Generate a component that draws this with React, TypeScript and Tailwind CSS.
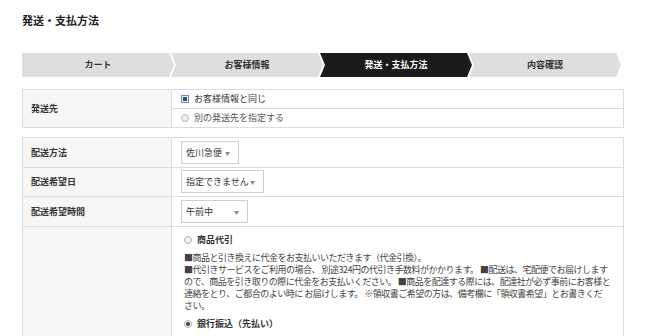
import React from 'react';

const font = { fontFamily: '"Noto Sans CJK JP", "Noto Sans", sans-serif' };

function Radio({ checked = false }: { checked?: boolean }) {
  return (
    <span className="inline-flex w-[8px] h-[8px] rounded-full border border-[#b5b5b5] bg-[#f0f0f0] items-center justify-center mr-[5px] shrink-0">
      {checked && <span className="w-[4px] h-[4px] rounded-full bg-[#444]" />}
    </span>
  );
}

function Checkbox() {
  return (
    <span className="inline-flex w-[8px] h-[8px] border border-[#6f8fbf] bg-[#e6edf7] items-center justify-center mr-[5px] shrink-0">
      <span className="w-[4px] h-[4px] bg-[#2c4f86]" />
    </span>
  );
}

function Select({ label, width }: { label: string; width: string }) {
  return (
    <div className={`${width} h-[23px] border border-[#cfcfcf] bg-white flex items-center justify-between pl-[4px] pr-[8px] text-[9px] text-[#333]`}>
      <span>{label}</span>
      <span className="text-[5px] text-[#888]">▼</span>
    </div>
  );
}

export default function App() {
  const steps = [
    { label: 'カート', active: false },
    { label: 'お客様情報', active: false },
    { label: '発送・支払方法', active: true },
    { label: '内容確認', active: false },
  ];

  const rows = [
    { label: '配送方法', value: '佐川急便', w: 'w-[58px]' },
    { label: '配送希望日', value: '指定できません', w: 'w-[83px]' },
    { label: '配送希望時間', value: '午前中', w: 'w-[67px]' },
  ];

  return (
    <div style={font} className="w-[650px] h-[336px] overflow-hidden bg-white pl-[22px] pr-[26px] text-[#333]">
      <h1 className="pt-[13px] text-[11px] leading-[14px] font-bold text-[#222]">発送・支払方法</h1>

      {/* Steps */}
      <div className="mt-[26px] flex h-[24px]">
        {steps.map((s, i) => (
          <div
            key={i}
            className={`w-[152px] shrink-0 h-full flex items-center justify-center text-[9px] font-bold ${i > 0 ? '-ml-[3px]' : ''} ${
              s.active ? 'bg-[#1b1b1b] text-white' : 'bg-[#dedede] text-[#333]'
            } ${
              i === 0
                ? '[clip-path:polygon(0_0,calc(100%_-_5px)_0,100%_50%,calc(100%_-_5px)_100%,0_100%)]'
                : '[clip-path:polygon(0_0,calc(100%_-_5px)_0,100%_50%,calc(100%_-_5px)_100%,0_100%,5px_50%)]'
            }`}
          >
            {s.label}
          </div>
        ))}
      </div>

      {/* Shipping address */}
      <div className="mt-[12px] border border-[#dcdcdc] flex">
        <div className="w-[149px] shrink-0 bg-[#f6f6f6] border-r border-[#dcdcdc] flex items-center pl-[8px] text-[9px] font-bold">
          発送先
        </div>
        <div className="flex-1 text-[9px]">
          <div className="h-[19px] flex items-center pl-[9px] border-b border-[#dcdcdc]">
            <Checkbox />
            お客様情報と同じ
          </div>
          <div className="h-[18px] flex items-center pl-[9px] text-[#555]">
            <Radio />
            別の発送先を指定する
          </div>
        </div>
      </div>

      {/* Delivery + payment */}
      <div className="mt-[9px] border border-[#dcdcdc]">
        {rows.map((r) => (
          <div key={r.label} className="flex h-[29.5px] border-b border-[#dcdcdc]">
            <div className="w-[149px] shrink-0 bg-[#f6f6f6] border-r border-[#dcdcdc] flex items-center pl-[8px] text-[9px] font-bold">
              {r.label}
            </div>
            <div className="flex-1 flex items-center pl-[9px]">
              <Select label={r.value} width={r.w} />
            </div>
          </div>
        ))}
        <div className="flex h-[140px]">
          <div className="w-[149px] shrink-0 bg-[#f6f6f6] border-r border-[#dcdcdc]" />
          <div className="flex-1 min-w-0 pl-[12px] pt-[7px] text-[9px] leading-[12px]">
            <div className="flex items-center font-bold text-[#333]">
              <Radio />
              商品代引
            </div>
            <div className="mt-[6px] text-[#444] whitespace-nowrap tracking-[-0.5px]">
              <div>■商品と引き換えに代金をお支払いいただきます（代金引換）。</div>
              <div>■代引きサービスをご利用の場合、 別途324円の代引き手数料がかかります。 ■配送は、宅配便でお届けします</div>
              <div>ので、商品を引き取りの際に代金をお支払いください。 ■商品を配達する際には、配達社が必ず事前にお客様と</div>
              <div>連絡をとり、ご都合のよい時に お届けします。 ※領収書ご希望の方は、備考欄に「領収書希望」とお書きくだ</div>
              <div>さい。</div>
            </div>
            <div className="mt-[6px] flex items-center font-bold text-[#333]">
              <Radio checked />
              銀行振込（先払い）
            </div>
          </div>
        </div>
      </div>
    </div>
  );
}
